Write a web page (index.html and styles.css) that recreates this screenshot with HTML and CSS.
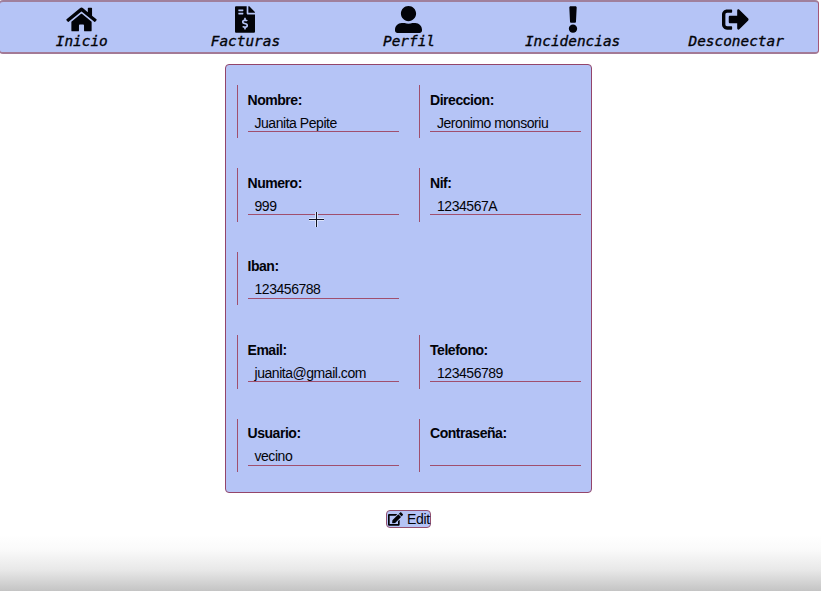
FILE: index.html
```html
<!DOCTYPE html>
<html lang="es">
<head>
<meta charset="utf-8">
<title>Perfil</title>
<link rel="stylesheet" href="styles.css">
</head>
<body>
<nav class="nav">
  <a class="nav-item"><svg class="icon" width="31" height="27" viewBox="0 0 576 512"><path d="M280.4 148.3L96 300.1V464a16 16 0 0 0 16 16l112.1-.3a16 16 0 0 0 15.9-16V368a16 16 0 0 1 16-16h64a16 16 0 0 1 16 16v95.6a16 16 0 0 0 16 16.1L464 480a16 16 0 0 0 16-16V300L295.7 148.3a12.2 12.2 0 0 0-15.3 0zM571.6 251.5L488 182.6V44a12 12 0 0 0-12-12h-56a12 12 0 0 0-12 12v72.6L318.5 43a48 48 0 0 0-61 0L4.3 251.5a12 12 0 0 0-1.6 16.9l25.5 31a12 12 0 0 0 16.9 1.6L280.4 107.2a12.2 12.2 0 0 1 15.3 0L531 301a12 12 0 0 0 16.9-1.6l25.5-31a12 12 0 0 0-1.8-16.9z"/></svg><span>Inicio</span></a>
  <a class="nav-item"><svg class="icon" width="20" height="27" viewBox="0 0 384 512"><path d="M377 105L279.1 7c-4.5-4.5-10.6-7-17-7H256v128h128v-6.1c0-6.3-2.5-12.4-7-16.9zm-153 31V0H24C10.7 0 0 10.7 0 24v464c0 13.3 10.7 24 24 24h336c13.300 0 24-10.700 24-24V160H248c-13.200 0-24-10.800-24-24zM64 72c0-4.400 3.600-8 8-8h80c4.400 0 8 3.600 8 8v16c0 4.400-3.600 8-8 8H72c-4.400 0-8-3.600-8-8zm0 80v-16c0-4.400 3.600-8 8-8h80c4.400 0 8 3.600 8 8v16c0 4.400-3.600 8-8 8H72c-4.400 0-8-3.600-8-8zm144 263.900V440c0 4.400-3.600 8-8 8h-16c-4.400 0-8-3.600-8-8v-24.300c-11.300-.6-22.300-4.500-31.400-11.300-3.900-2.900-4.100-8.800-.6-12.100l11.800-11.200c2.800-2.600 6.900-2.800 10.100-.7 3.900 2.400 8.300 3.700 12.800 3.700h28.100c6.500 0 11.800-5.900 11.800-13.200 0-6-3.600-11.200-8.800-12.700l-45-13.500c-18.600-5.600-31.600-23.400-31.600-43.400 0-24.500 19-44.400 42.700-45.100V232c0-4.400 3.600-8 8-8h16c4.400 0 8 3.600 8 8v24.300c11.300.6 22.300 4.500 31.400 11.300 3.900 2.900 4.100 8.800.6 12.100l-11.800 11.200c-2.800 2.600-6.900 2.800-10.100.7-3.900-2.400-8.300-3.700-12.800-3.700h-28.100c-6.500 0-11.800 5.900-11.800 13.200 0 6 3.600 11.200 8.800 12.700l45 13.500c18.600 5.600 31.600 23.400 31.600 43.400 0 24.500-19 44.400-42.700 45.200z"/></svg><span>Facturas</span></a>
  <a class="nav-item"><svg class="icon" width="27" height="27" viewBox="0 0 512 512"><path d="M256 288c79.500 0 144-64.500 144-144S335.500 0 256 0 112 64.500 112 144s64.500 144 144 144zm128 32h-55.100c-22.200 10.200-46.900 16-72.900 16s-50.600-5.800-72.900-16H128C57.300 320 0 377.300 0 448v16c0 26.500 21.500 48 48 48h416c26.500 0 48-21.500 48-48v-16c0-70.700-57.300-128-128-128z"/></svg><span>Perfil</span></a>
  <a class="nav-item"><svg class="icon" width="10" height="27" viewBox="0 0 192 512"><path d="M176 432c0 44.100-35.900 80-80 80s-80-35.900-80-80 35.900-80 80-80 80 35.900 80 80zM25.300 25.200l13.600 272C39.500 310 50 320 62.800 320h66.300c12.800 0 23.300-10 24-22.800l13.600-272C167.400 11.500 156.500 0 142.800 0H49.200C35.500 0 24.600 11.500 25.300 25.200z"/></svg><span>Incidencias</span></a>
  <a class="nav-item"><svg class="icon" width="27" height="27" viewBox="0 0 512 512"><path d="M497 273L329 441c-15 15-41 4.500-41-17v-96H152c-13.300 0-24-10.700-24-24v-96c0-13.300 10.700-24 24-24h136V88c0-21.400 25.900-32 41-17l168 168c9.300 9.400 9.300 24.600 0 34zM192 436v-40c0-6.600-5.400-12-12-12H96c-17.700 0-32-14.300-32-32V160c0-17.700 14.300-32 32-32h84c6.600 0 12-5.400 12-12V76c0-6.600-5.400-12-12-12H96c-53 0-96 43-96 96v192c0 53 43 96 96 96h84c6.600 0 12-5.400 12-12z"/></svg><span>Desconectar</span></a>
</nav>
<main class="profile">
  <section class="card">
    <div class="field"><b>Nombre:</b><div class="value">Juanita Pepite</div></div>
    <div class="field"><b>Direccion:</b><div class="value">Jeronimo monsoriu</div></div>
    <div class="field"><b>Numero:</b><div class="value">999</div></div>
    <div class="field"><b>Nif:</b><div class="value">1234567A</div></div>
    <div class="field wide"><b>Iban:</b><div class="value">123456788</div></div>
    <div class="field"><b>Email:</b><div class="value">juanita@gmail.com</div></div>
    <div class="field"><b>Telefono:</b><div class="value">123456789</div></div>
    <div class="field"><b>Usuario:</b><div class="value">vecino</div></div>
    <div class="field"><b>Contraseña:</b><div class="value"></div></div>
  </section>
  <button class="edit"><svg width="15" height="14" viewBox="0 0 576 512"><path d="M402.600 83.200l90.200 90.200c3.800 3.800 3.800 10 0 13.800L274.400 405.600l-92.800 10.300c-12.400 1.400-22.900-9.100-21.500-21.500l10.300-92.800L388.800 83.200c3.800-3.800 10-3.800 13.800 0zm162-22.900l-48.800-48.800c-15.200-15.200-39.900-15.200-55.200 0l-35.400 35.400c-3.800 3.800-3.800 10 0 13.800l90.200 90.200c3.800 3.800 10 3.800 13.800 0l35.400-35.400c15.200-15.300 15.200-40 0-55.200zM384 346.200V448H64V128h229.800c3.200 0 6.200-1.300 8.500-3.500l40-40c7.600-7.600 2.200-20.500-8.500-20.500H48C21.500 64 0 85.500 0 112v352c0 26.500 21.500 48 48 48h352c26.500 0 48-21.500 48-48V306.200c0-10.700-12.900-16-20.500-8.500l-40 40c-2.200 2.300-3.500 5.300-3.500 8.500z"/></svg><span>Edit</span></button>
</main>
<svg class="crosshair" width="15" height="15" viewBox="0 0 15 15"><path class="halo" d="M7.500 0v15M0 7.500h15"/><path d="M7.500 0v15M0 7.500h15"/></svg>
</body>
</html>
```
FILE: styles.css
```css
* { box-sizing: border-box; }

body {
  margin: 0;
  height: 591px;
  overflow: hidden;
  font-family: "Liberation Sans", Arial, sans-serif;
  font-size: 14px;
  letter-spacing: -0.46px;
  color: #020308;
  background: linear-gradient(#fff 0, #fff 535px, #fafafa 550px, #e8e8e8 570px, #c4c4c4 591px);
}

svg { fill: currentColor; display: block; }

.nav {
  display: flex;
  width: 820px;
  height: 54px;
  margin-left: -1px;
  padding-top: 4px;
  border: 1px solid #a55876;
  border-top: 2px solid #a0809c;
  border-bottom: 2px solid #a37a96;
  border-radius: 4px;
  background: #b5c4f6;
}

.nav-item {
  flex: 1;
  display: flex;
  flex-direction: column;
  align-items: center;
  font: italic 14.4px/16px "DejaVu Sans Mono", monospace;
  letter-spacing: 0;
  -webkit-text-stroke: 0.35px currentColor;
}

.nav-item:last-child .icon { margin-left: -2px; }

.profile {
  display: flex;
  flex-direction: column;
  align-items: center;
  width: 817px;
}

.card {
  display: grid;
  grid-template-columns: 162px 162px;
  column-gap: 20.5px;
  grid-auto-rows: 53.4px;
  row-gap: 30px;
  width: 367px;
  height: 429px;
  margin-top: 10px;
  padding: 20px 10px 20px 10.5px;
  border: 1px solid #93456a;
  border-radius: 4px;
  background: #b5c4f6;
}

.field {
  border-left: 1px solid #a04f6e;
  padding: 6.6px 0 0 10px;
}

.field b { display: block; line-height: 17px; }

.wide { grid-column: 1 / -1; width: 162px; }

.value {
  height: 23.4px;
  padding-left: 7px;
  line-height: 28.4px;
  border-bottom: 1px solid #a04f6e;
}

.edit {
  display: flex;
  align-items: center;
  gap: 4px;
  width: 45px;
  height: 18px;
  margin-top: 17px;
  padding: 0 1px;
  border: 1px solid #93506f;
  border-radius: 4px;
  background: #b5c4f6;
  font: inherit;
  letter-spacing: -0.3px;
  color: inherit;
}

.edit svg { flex: none; }

.crosshair {
  position: absolute;
  left: 309px;
  top: 212px;
  stroke: #101322;
}

.halo { stroke: #dce3fb; stroke-width: 3; }
```
